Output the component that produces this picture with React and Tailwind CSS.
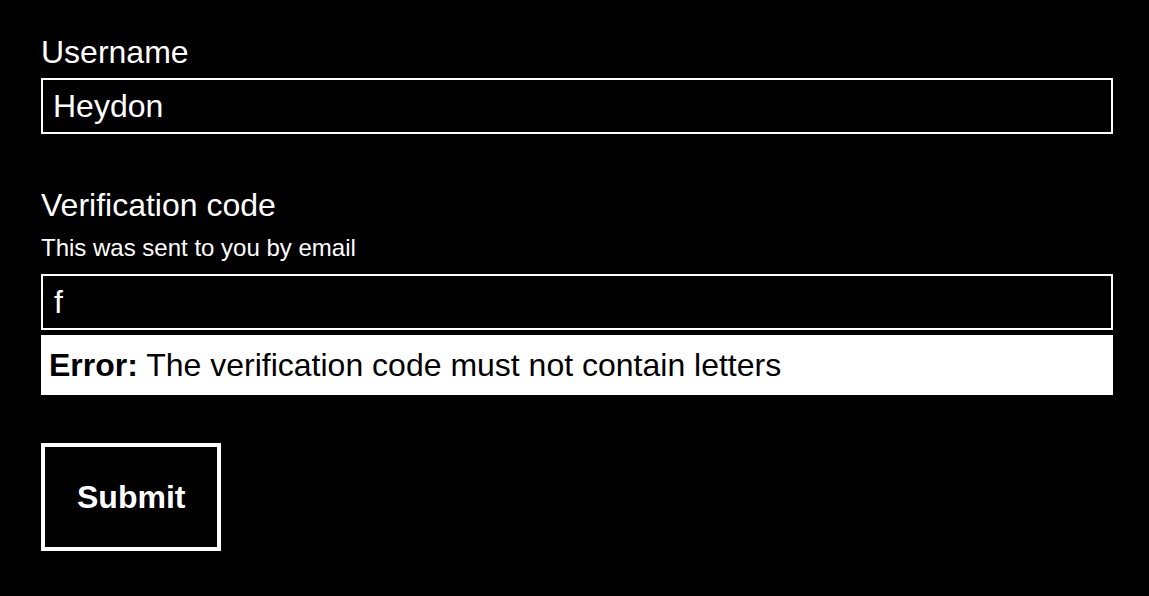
import React from 'react';

const font = { fontFamily: '"Liberation Sans", Arial, sans-serif' };

const App = () => {
  return (
    <div className="min-h-screen bg-black text-white" style={font}>
      <form className="pl-[41px] pr-[36px] pt-[34px]" onSubmit={(e) => e.preventDefault()}>
        <label htmlFor="username" className="block text-[32px] leading-[36px]">
          Username
        </label>
        <input
          id="username"
          type="text"
          defaultValue="Heydon"
          className="mt-2 block w-full h-[56px] border-2 border-white bg-black pl-[10px] pr-2 text-[32px] leading-[36px] text-white outline-none"
        />

        <label htmlFor="code" className="mt-[53px] block text-[32px] leading-[36px]">
          Verification code
        </label>
        <p id="code-hint" className="mt-[11px] text-[24px] leading-[28px]">
          This was sent to you by email
        </p>
        <input
          id="code"
          type="text"
          defaultValue="f"
          aria-describedby="code-hint code-error"
          className="mt-3 block w-full h-[56px] border-2 border-white bg-black pl-[11px] pr-2 text-[32px] leading-[36px] text-white outline-none"
        />
        <div id="code-error" className="mt-[5px] h-[60px] flex items-center bg-white px-2 text-[32px] leading-[36px] text-black">
          <span>
            <strong className="font-bold">Error:</strong> The verification code must not contain letters
          </span>
        </div>

        <button
          type="submit"
          className="mt-12 block border-4 border-white bg-black p-8 text-[32px] leading-[36px] font-bold text-white"
        >
          Submit
        </button>
      </form>
    </div>
  );
};

export default App;
